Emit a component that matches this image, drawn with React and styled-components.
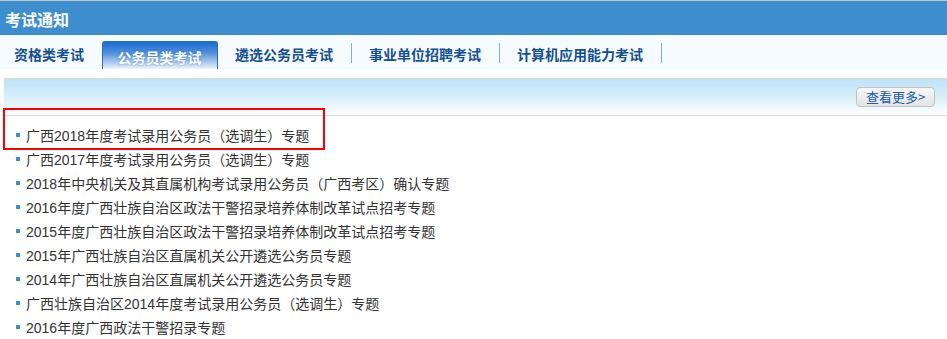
import React from "react";
import styled, { createGlobalStyle } from "styled-components";

const Global = createGlobalStyle`
  html, body { margin: 0; padding: 0; background: #fff; }
  body { font-family: "Liberation Sans", "Noto Sans CJK SC", sans-serif; }
`;

const Page = styled.div`
  position: relative;
  width: 947px;
`;

const Header = styled.div`
  height: 34px;
  border-top: 1px solid #c4c4c4;
  background: #3d8ecf;
  display: flex;
  align-items: center;
  padding-left: 5px;
  padding-top: 2px;
  box-sizing: border-box;
  height: 35px;
`;

const Title = styled.h2`
  margin: 0;
  font-family: "Noto Sans CJK SC", sans-serif;
  font-size: 16px;
  font-weight: 700;
  color: #fff;
  letter-spacing: 0;
`;

const TabBar = styled.div`
  height: 34px;
  background: #f5fbff;
  display: flex;
  align-items: flex-end;
`;

const Tab = styled.div`
  height: 28px;
  display: flex;
  align-items: center;
  box-sizing: border-box;
  padding: 0 17.5px 0 ${(p) => (p.$first ? "14px" : "17.5px")};
  font-family: "Noto Sans CJK SC", sans-serif;
  font-size: 14px;
  font-weight: 700;
  color: #14508f;
  white-space: nowrap;
  padding-bottom: 3px;
`;

const ActiveTab = styled(Tab)`
  padding: 3px 15px 0;
  color: #fff;
  border: 1px solid #2a6db5;
  border-bottom: none;
  border-radius: 3px 3px 0 0;
  background: linear-gradient(to bottom, #1a6bd0 0%, #4f8fdc 40%, #a9c8ee 75%, #eef5fd 100%);
  text-shadow: 0 0 2px rgba(30, 90, 170, 0.6);
`;

const Sep = styled.span`
  width: 1px;
  height: 20px;
  background: #7eaede;
  align-self: flex-end;
  margin-bottom: 6px;
`;

const MoreBar = styled.div`
  margin: 9px 0 0 4px;
  height: 36px;
  border-top: 1px solid #dcdcdc;
  border-bottom: 1px solid #dcdcdc;
  background: linear-gradient(to bottom, #bde3f7 0%, #dcf0fb 55%, #ffffff 100%);
  display: flex;
  align-items: center;
  justify-content: flex-end;
  padding-right: 12px;
`;

const MoreButton = styled.button`
  width: 79px;
  height: 20px;
  padding: 0;
  margin-top: -1px;
  border: 1px solid #c2c2c2;
  border-radius: 4px;
  background: linear-gradient(to bottom, #f7f7f7, #e4e4e4);
  font-family: "Noto Sans CJK SC", sans-serif;
  font-size: 13px;
  line-height: 18px;
  color: #1a5ca6;
  cursor: pointer;
`;

const List = styled.ul`
  list-style: none;
  margin: 0;
  padding: 7px 0 0 16px;
`;

const Item = styled.li`
  display: flex;
  align-items: center;
  height: 24px;
  font-family: "Liberation Sans", "Noto Sans CJK SC", sans-serif;
  font-size: 14px;
  color: #333;
  white-space: nowrap;
`;

const Bullet = styled.span`
  width: 4px;
  height: 4px;
  background: #3a8fd9;
  margin-right: 6px;
  flex: none;
`;

const Highlight = styled.div`
  position: absolute;
  left: 3px;
  top: 108px;
  width: 318px;
  height: 38px;
  border: 2px solid #f00;
  pointer-events: none;
`;

const tabs = ["资格类考试", "公务员类考试", "遴选公务员考试", "事业单位招聘考试", "计算机应用能力考试"];
const activeIndex = 1;

const items = [
  "广西2018年度考试录用公务员（选调生）专题",
  "广西2017年度考试录用公务员（选调生）专题",
  "2018年中央机关及其直属机构考试录用公务员（广西考区）确认专题",
  "2016年度广西壮族自治区政法干警招录培养体制改革试点招考专题",
  "2015年度广西壮族自治区政法干警招录培养体制改革试点招考专题",
  "2015年广西壮族自治区直属机关公开遴选公务员专题",
  "2014年广西壮族自治区直属机关公开遴选公务员专题",
  "广西壮族自治区2014年度考试录用公务员（选调生）专题",
  "2016年度广西政法干警招录专题",
];

export default function App() {
  return (
    <Page>
      <Global />
      <Header>
        <Title>考试通知</Title>
      </Header>
      <TabBar>
        {tabs.map((t, i) => {
          const nodes = [];
          if (i === activeIndex) {
            nodes.push(<ActiveTab key={t}>{t}</ActiveTab>);
          } else {
            nodes.push(
              <Tab key={t} $first={i === 0}>
                {t}
              </Tab>
            );
            if (i + 1 !== activeIndex) nodes.push(<Sep key={t + "-sep"} />);
          }
          return nodes;
        })}
      </TabBar>
      <MoreBar>
        <MoreButton>查看更多&gt;</MoreButton>
      </MoreBar>
      <List>
        {items.map((t) => (
          <Item key={t}>
            <Bullet />
            {t}
          </Item>
        ))}
      </List>
      <Highlight />
    </Page>
  );
}
